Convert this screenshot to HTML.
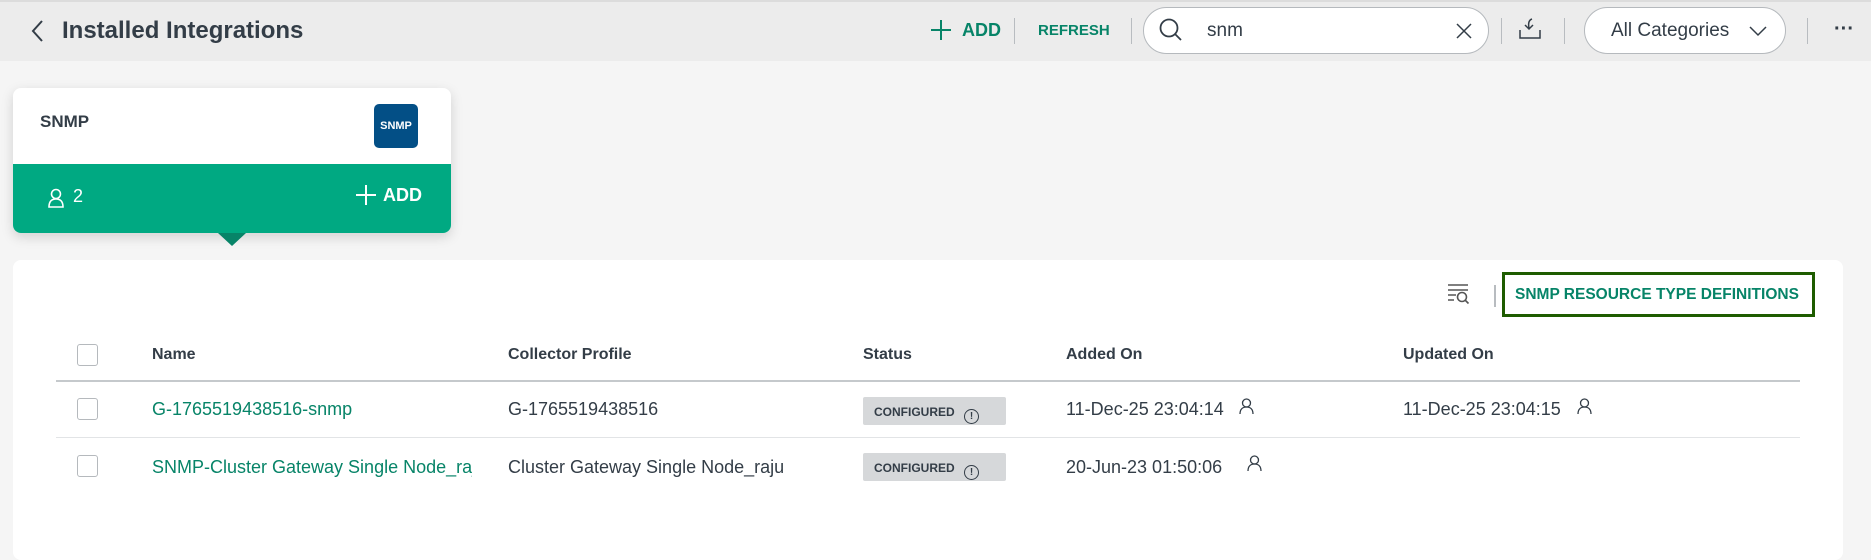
<!DOCTYPE html>
<html><head><meta charset="utf-8"><style>
*{box-sizing:border-box;margin:0;padding:0}
body{width:1871px;height:544px;background:#f5f5f5;font-family:"Liberation Sans",sans-serif;position:relative;overflow:hidden;color:#333d47}
.a{position:absolute}
.top{left:0;top:0;width:1871px;height:61px;background:#ececec;border-top:2px solid #dcdcdc}
.sep{width:1px;height:26px;background:#b8bcc0;top:18px}
.g{color:#078468}
.pill{background:#fff;border:1px solid #b5b9bd;border-radius:24px;height:47px;top:7px}
.card{left:13px;top:88px;width:438px;height:145px;background:#fff;border-radius:8px;box-shadow:0 4px 12px rgba(0,0,0,.15);overflow:hidden}
.panel{left:13px;top:260px;width:1830px;height:300px;background:#fff;border-radius:8px}
.cb{width:21px;height:22px;border:1px solid #b5b9bd;border-radius:3px;background:#fff}
.h{font-weight:bold;font-size:16px;top:346px}
.t{font-size:18px}
.badge{width:143px;height:28px;background:#d6d8da;border-radius:2px;font-size:12px;font-weight:bold;color:#333d47;padding:8px 0 0 11px}
</style></head><body>
<div class="a top"></div>
<svg class="a" style="left:30px;top:19px" width="14" height="24" viewBox="0 0 14 24"><path d="M12 2L3 12l9 10" fill="none" stroke="#333d47" stroke-width="2"/></svg>
<div class="a" style="left:62px;top:17px;font-size:24px;font-weight:bold;color:#333d47">Installed Integrations</div>
<svg class="a" style="left:930px;top:19px" width="22" height="22"><path d="M11 1v20M1 11h20" stroke="#078468" stroke-width="2"/></svg>
<div class="a g" style="left:962px;top:20px;font-size:18px;font-weight:bold">ADD</div>
<div class="a sep" style="left:1014px"></div>
<div class="a g" style="left:1038px;top:22px;font-size:15px;font-weight:bold">REFRESH</div>
<div class="a sep" style="left:1131px"></div>
<div class="a pill" style="left:1143px;width:346px"></div>
<svg class="a" style="left:1158px;top:17px" width="26" height="26"><circle cx="11" cy="11" r="8.5" fill="none" stroke="#333d47" stroke-width="1.8"/><path d="M17 17l6 6" stroke="#333d47" stroke-width="1.8"/></svg>
<div class="a" style="left:1207px;top:20px;font-size:19px;color:#333d47">snm</div>
<svg class="a" style="left:1456px;top:23px" width="16" height="16"><path d="M1 1l14 14M15 1L1 15" stroke="#333d47" stroke-width="1.5"/></svg>
<div class="a sep" style="left:1501px"></div>
<svg class="a" style="left:1518px;top:17px" width="24" height="24"><path d="M2 13v8h20v-8" fill="none" stroke="#333d47" stroke-width="1.5"/><path d="M14 2c-3 1-4 4-3 9M7 8l4 4 4-4" fill="none" stroke="#333d47" stroke-width="1.5"/></svg>
<div class="a sep" style="left:1564px"></div>
<div class="a pill" style="left:1584px;width:202px"></div>
<div class="a" style="left:1611px;top:20px;font-size:19px;color:#333d47">All Categories</div>
<svg class="a" style="left:1749px;top:25px" width="18" height="12"><path d="M1 2l8 8 8-8" fill="none" stroke="#333d47" stroke-width="1.5"/></svg>
<div class="a sep" style="left:1807px"></div>
<div class="a" style="left:1834px;top:18px;font-size:20px;font-weight:bold">···</div>

<div class="a card">
<div class="a" style="left:27px;top:24px;font-size:17px;font-weight:bold;color:#333d47">SNMP</div>
<div class="a" style="left:361px;top:16px;width:44px;height:44px;background:#034f86;border-radius:5px;color:#fff;font-size:11px;font-weight:bold;text-align:center;line-height:44px">SNMP</div>
<div class="a" style="left:0;top:76px;width:438px;height:69px;background:#00a982"></div>
<svg class="a" style="left:34px;top:100px" width="18" height="20"><circle cx="9" cy="6" r="4.5" fill="none" stroke="#fff" stroke-width="1.6"/><path d="M2 19c0-6 3-8 7-8s7 2 7 8z" fill="none" stroke="#fff" stroke-width="1.6"/></svg>
<div class="a" style="left:60px;top:98px;font-size:18px;color:#fff">2</div>
<svg class="a" style="left:342px;top:96px" width="22" height="22"><path d="M11 1v20M1 11h20" stroke="#fff" stroke-width="2"/></svg>
<div class="a" style="left:370px;top:97px;font-size:18px;font-weight:bold;color:#fff">ADD</div>
</div>
<svg class="a" style="left:218px;top:233px" width="28" height="14"><path d="M0 0h28L14 13z" fill="#078468"/></svg>

<div class="a panel"></div>
<svg class="a" style="left:1447px;top:283px" width="24" height="22"><path d="M1 2h20M1 7h20M1 12h8M1 17h6" stroke="#555" stroke-width="1.6"/><circle cx="15" cy="14" r="4.5" fill="none" stroke="#555" stroke-width="1.6"/><path d="M18 17l3.5 3.5" stroke="#555" stroke-width="1.6"/></svg>
<div class="a" style="left:1494px;top:285px;width:2px;height:22px;background:#b8bcc0"></div>
<div class="a" style="left:1502px;top:272px;width:313px;height:45px;border:3px solid #1e5c00"></div>
<div class="a g" style="left:1515px;top:286px;font-size:15.5px;font-weight:bold">SNMP RESOURCE TYPE DEFINITIONS</div>

<div class="a cb" style="left:77px;top:344px"></div>
<div class="a h" style="left:152px">Name</div>
<div class="a h" style="left:508px">Collector Profile</div>
<div class="a h" style="left:863px">Status</div>
<div class="a h" style="left:1066px">Added On</div>
<div class="a h" style="left:1403px">Updated On</div>
<div class="a" style="left:56px;top:380px;width:1744px;height:2px;background:#c5c9cc"></div>

<div class="a cb" style="left:77px;top:398px"></div>
<div class="a t g" style="left:152px;top:399px">G-1765519438516-snmp</div>
<div class="a t" style="left:508px;top:399px">G-1765519438516</div>
<div class="a badge" style="left:863px;top:397px">CONFIGURED <span style="display:inline-block;width:15px;height:15px;border:1.3px solid #333d47;border-radius:50%;font-size:10px;text-align:center;line-height:13px;margin-left:6px;vertical-align:-3px">!</span></div>
<div class="a t" style="left:1066px;top:399px">11-Dec-25 23:04:14</div>
<svg class="a" style="left:1239px;top:398px" width="15" height="17"><circle cx="7.5" cy="5" r="4" fill="none" stroke="#333d47" stroke-width="1.3"/><path d="M1 16c0-5 3-7 6.5-7s6.5 2 6.5 7" fill="none" stroke="#333d47" stroke-width="1.3"/></svg>
<div class="a t" style="left:1403px;top:399px">11-Dec-25 23:04:15</div>
<svg class="a" style="left:1577px;top:398px" width="15" height="17"><circle cx="7.5" cy="5" r="4" fill="none" stroke="#333d47" stroke-width="1.3"/><path d="M1 16c0-5 3-7 6.5-7s6.5 2 6.5 7" fill="none" stroke="#333d47" stroke-width="1.3"/></svg>
<div class="a" style="left:56px;top:437px;width:1744px;height:1px;background:#e2e4e6"></div>

<div class="a cb" style="left:77px;top:455px"></div>
<div class="a t g" style="left:152px;top:457px;width:320px;overflow:hidden;white-space:nowrap">SNMP-Cluster Gateway Single Node_raju</div>
<div class="a t" style="left:508px;top:457px">Cluster Gateway Single Node_raju</div>
<div class="a badge" style="left:863px;top:453px">CONFIGURED <span style="display:inline-block;width:15px;height:15px;border:1.3px solid #333d47;border-radius:50%;font-size:10px;text-align:center;line-height:13px;margin-left:6px;vertical-align:-3px">!</span></div>
<div class="a t" style="left:1066px;top:457px">20-Jun-23 01:50:06</div>
<svg class="a" style="left:1247px;top:455px" width="15" height="17"><circle cx="7.5" cy="5" r="4" fill="none" stroke="#333d47" stroke-width="1.3"/><path d="M1 16c0-5 3-7 6.5-7s6.5 2 6.5 7" fill="none" stroke="#333d47" stroke-width="1.3"/></svg>
</body></html>
